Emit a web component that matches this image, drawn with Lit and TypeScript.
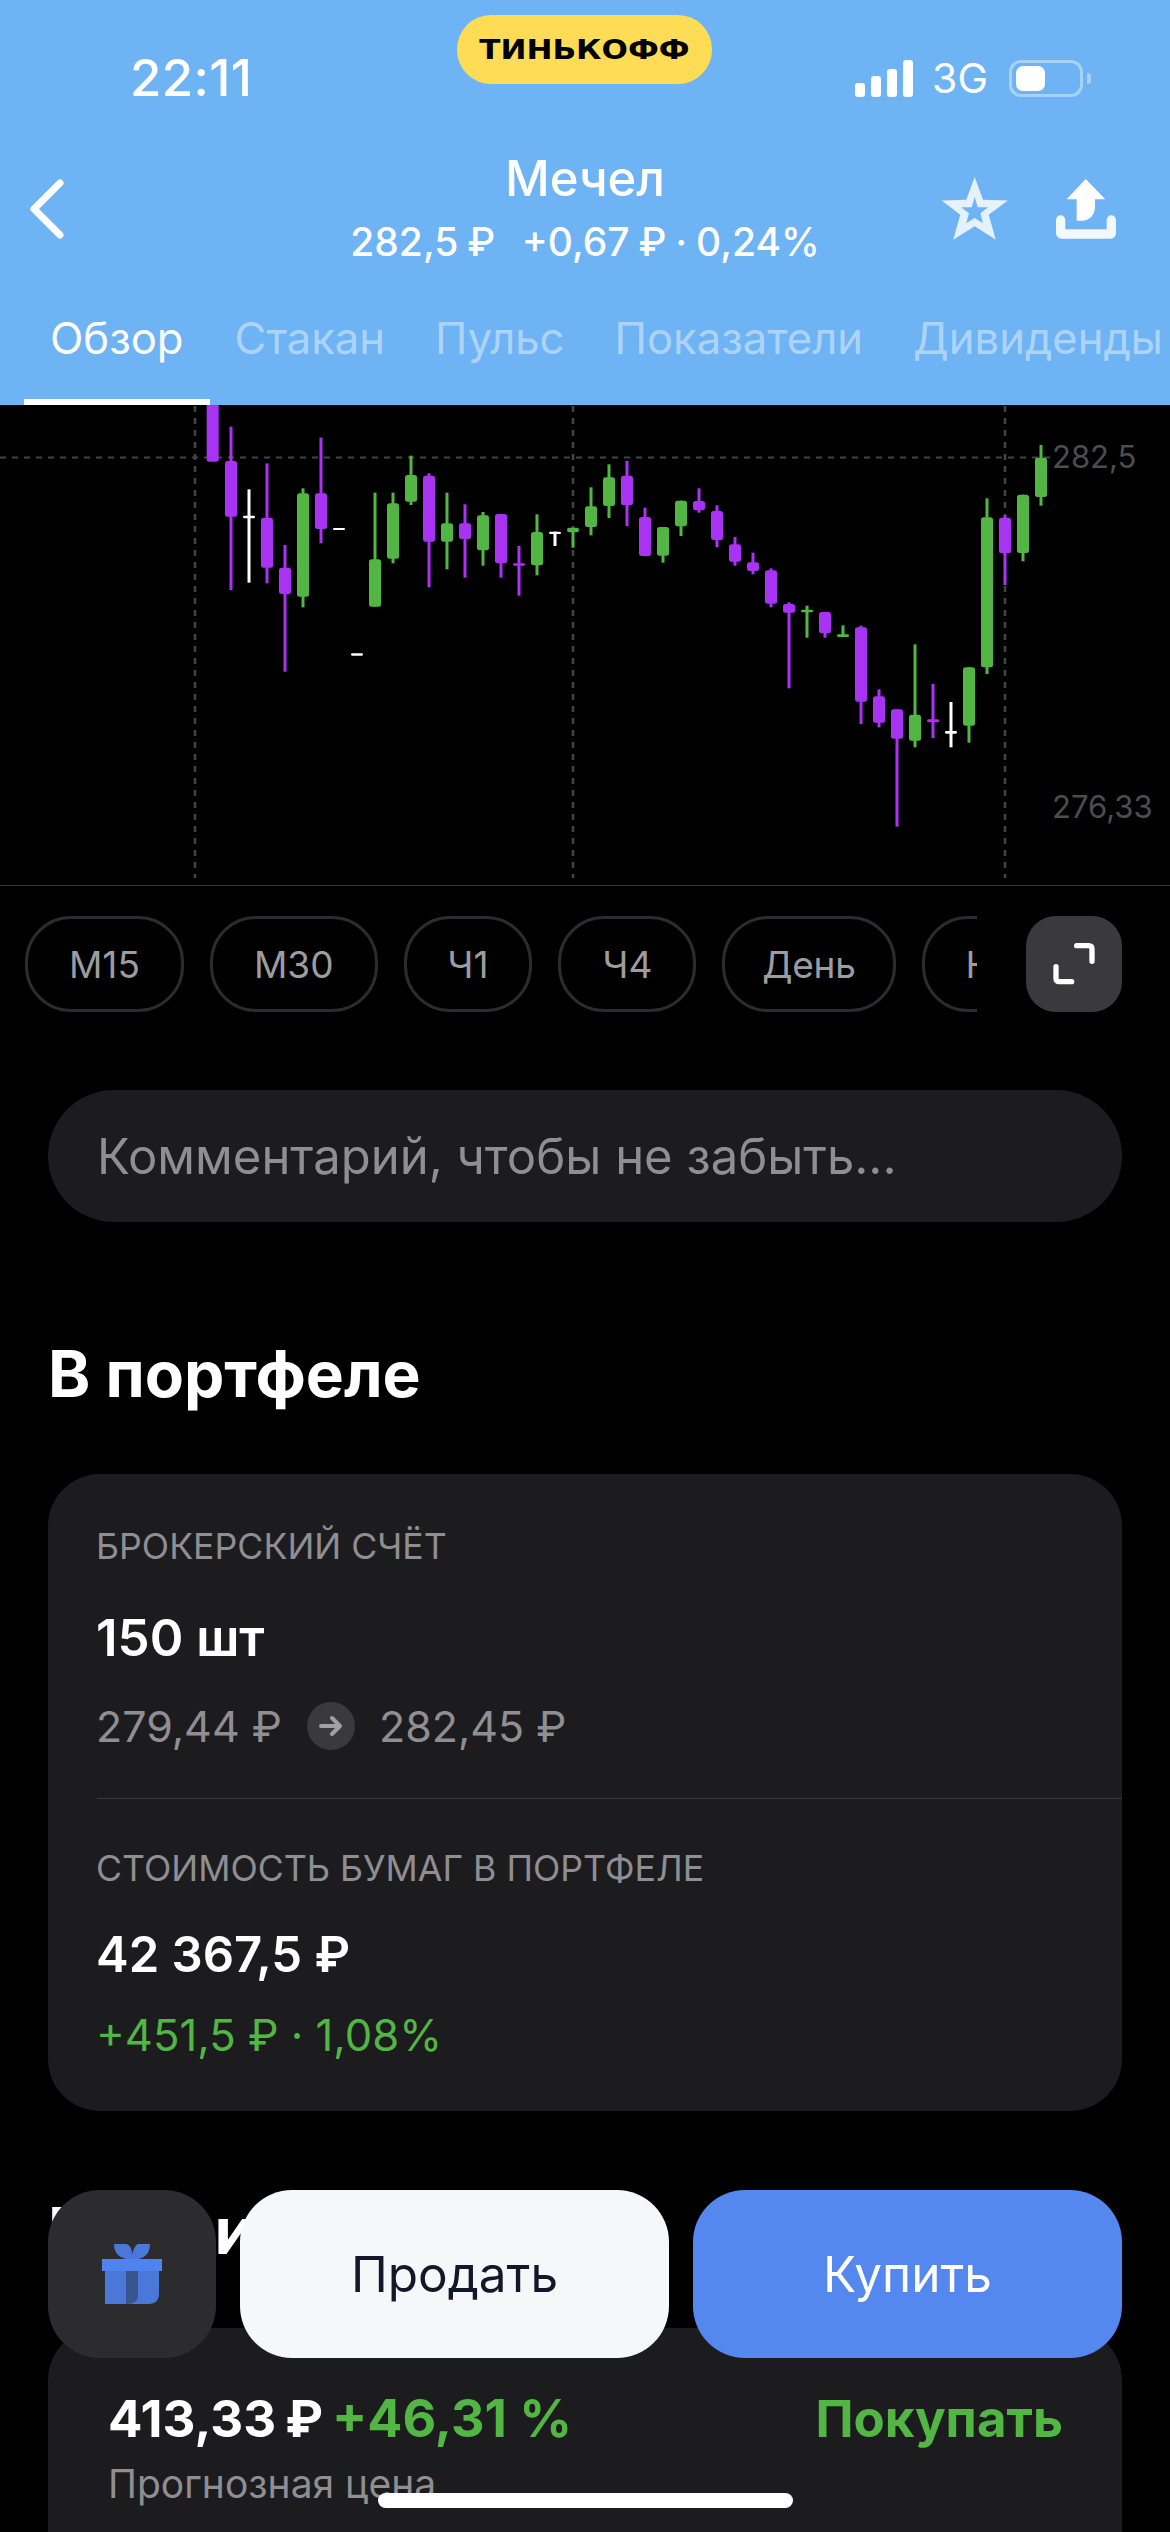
import { LitElement, html, css, svg } from "lit";
import { customElement } from "lit/decorators.js";

type C = [number, number | null, number | null, number, number, "p" | "g" | "w"];
// x, wick top, wick bottom, body top, body bottom (zoomed reference units)
const CANDLES: C[] = [
  [212.7, null, null, 0, 185, "p"], [231, 80, 570, 183, 350, "p"], [249, 268, 548, 347, 355, "w"],
  [267, 190, 550, 353, 503, "p"], [285, 435, 815, 503, 582, "p"], [303, 265, 622, 280, 590, "g"],
  [321, 113, 430, 280, 387, "p"], [339, null, null, 384, 390, "w"], [357, null, null, 760, 767, "w"],
  [375, 278, 620, 478, 620, "g"], [393, 278, 490, 310, 476, "g"], [411, 167, 315, 225, 305, "g"],
  [429, 220, 562, 227, 425, "p"], [447, 278, 508, 370, 425, "g"], [465, 313, 533, 370, 417, "p"],
  [483, 336, 497, 346, 451, "g"], [501, 342, 533, 342, 490, "p"], [519, 438, 587, 490, 497, "p"],
  [537, 343, 526, 396, 496, "g"], [555, 395, 438, 395, 402, "w"], [573, 383, 443, 383, 397, "g"],
  [591, 262, 406, 319, 381, "g"], [609, 193, 354, 232, 318, "g"], [627, 183, 378, 227, 316, "p"],
  [645, 323, 468, 351, 468, "p"], [663, 381, 488, 381, 467, "g"], [681, 302, 408, 302, 379, "g"],
  [699, 265, 338, 303, 331, "p"], [717, 316, 442, 333, 420, "p"], [735, 411, 497, 433, 485, "p"],
  [753, 458, 523, 487, 513, "p"], [771, 505, 622, 511, 611, "p"], [789, 607, 865, 612, 638, "p"],
  [807, 617, 713, 629, 637, "g"], [825, 636, 713, 636, 700, "p"], [843, 676, 711, 703, 711, "g"],
  [861, 677, 972, 682, 905, "p"], [879, 868, 982, 889, 968, "p"], [897, 928, 1280, 928, 1016, "p"],
  [915, 733, 1042, 944, 1022, "g"], [933, 852, 1014, 958, 967, "p"], [951, 906, 1042, 993, 1001, "w"],
  [969, 802, 1028, 802, 977, "g"], [987, 295, 822, 352, 802, "g"], [1005, 346, 555, 353, 460, "p"],
  [1023, 284, 484, 284, 459, "g"], [1041, 135, 317, 173, 291, "g"],
];
const COL = { p: "#a833f2", g: "#52b544", w: "#ffffff" };
const Y = (v: number) => 400 + v / 3;

function candle(c: C) {
  const [x, wt, wb, bt, bb, k] = c;
  const fill = COL[k];
  const h = Math.max(Y(bb) - Y(bt), 2);
  return svg`
    ${wt !== null && wb !== null
      ? svg`<rect x=${x - 1.5} y=${Y(wt)} width="3" height=${Y(wb) - Y(wt)} fill=${fill}></rect>`
      : ""}
    <rect x=${x - 6} y=${Y(bt)} width="12" height=${h} rx=${Math.min(2.5, h / 2)} fill=${fill}></rect>`;
}

const TABS = ["Обзор", "Стакан", "Пульс", "Показатели", "Дивиденды"];
const FRAMES = ["М5", "М15", "М30", "Ч1", "Ч4", "День", "Нед"];

@customElement("app-root")
export class AppRoot extends LitElement {
  static styles = css`
    :host {
      display: block;
      position: relative;
      width: 1170px;
      height: 2532px;
      overflow: hidden;
      background: #000;
      color: #fff;
      font-family: Inter, "Noto Sans", sans-serif;
    }
    .head { background: #6eb3f3; height: 405px; overflow: hidden; }
    .status { display: flex; align-items: center; height: 40px; padding: 58px 79px 0 130px; }
    .time { font-size: 51px; font-weight: 500; line-height: 40px; flex: 1; letter-spacing: 0.3px; }
    .bars { display: flex; align-items: flex-end; gap: 6px; height: 37px; margin-right: 19px; }
    .bars i { display: block; width: 10px; background: #fff; border-radius: 3px; }
    .net { font-size: 41px; line-height: 40px; margin-right: 21px; }
    .batt { width: 74px; height: 37px; box-sizing: border-box; border: 3px solid rgba(255,255,255,.4); border-radius: 12px; padding: 3px 4px; }
    .batt i { display: block; width: 29px; height: 100%; background: #fff; border-radius: 7px; }
    .nub { width: 4px; height: 11px; background: rgba(255,255,255,.4); border-radius: 0 3px 3px 0; margin-left: 4px; }
    .pill {
      position: absolute; left: 457px; top: 15px; width: 255px; height: 69px;
      background: #fedc56; border-radius: 34px; display: flex; align-items: center; justify-content: center;
      color: #000; font-family: "DejaVu Sans", sans-serif; font-weight: 700; font-size: 27px;
    }
    .pill span { display: block; transform: scaleX(1.15); }
    .nav { display: grid; grid-template-columns: 1fr auto 1fr; align-items: center; margin-top: 54px; height: 113px; }
    .back { margin-left: 30px; display: block; }
    .titles { text-align: center; }
    .title { font-size: 49px; line-height: 54px; font-weight: 500; }
    .sub { font-size: 39px; line-height: 46px; margin-top: 13px; white-space: pre; font-weight: 500; word-spacing: -1.5px; }
    .acts { display: flex; justify-content: flex-end; align-items: center; gap: 48px; padding-right: 54px; }
    .tabs { display: flex; margin-top: 48px; white-space: nowrap; padding-left: 24px; }
    .tab { padding: 0 25px 34px; font-size: 43.6px; line-height: 52px; color: rgba(255,255,255,.45); border-bottom: 6px solid transparent; }
    .tab.on { padding: 0 26px 34px; color: #fff; border-bottom-color: #fff; }
    .chart { display: block; width: 1170px; height: 480px; border-bottom: 1px solid #333; }
    .lab { font-size: 31px; fill: #4d4d4f; }
    .frames { display: flex; margin-top: 30px; padding-right: 48px; }
    .rail { flex: 1; min-width: 0; overflow: hidden; margin-right: 49px; }
    .track { display: flex; gap: 26px; margin-left: -145px; }
    .fr {
      flex: none; height: 96px; box-sizing: border-box; padding: 0 41px; border: 3px solid #2c2c2e; border-radius: 46px;
      display: flex; align-items: center; font-size: 37px; color: #9c9ca1;
    }
    .fr.word { padding: 0 37px; letter-spacing: -0.3px; }
    .exp { flex: none; width: 96px; height: 96px; display: block; }
    .comment {
      margin: 78px 48px 0; height: 132px; border-radius: 66px; background: #1c1c1e;
      padding-left: 49px; display: flex; align-items: center; font-size: 49px; color: #8e8e93;
    }
    h2 { margin: 116px 48px 64px; font-size: 64px; line-height: 72px; font-weight: 700; }
    h2.second { margin: 84px 48px 61px; }
    .card { margin: 0 48px; background: #1c1c1e; border-radius: 52px; overflow: hidden; }
    .sec { padding-left: 48px; }
    .sec.a { padding-top: 52px; padding-bottom: 46px; }
    .sec.b { padding-top: 49px; padding-bottom: 49px; }
    .rule { height: 1px; margin-left: 49px; background: #3a3a3c; }
    .lbl { font-size: 35.7px; line-height: 40px; color: #8e8e93; }
    .big { line-height: 56px; font-weight: 600; }
    .big.q { margin-top: 44px; font-size: 51px; }
    .big.v { margin-top: 39px; font-size: 49px; }
    .prices { display: flex; align-items: center; margin-top: 34px; font-size: 43px; line-height: 52px; color: #8e8e93; }
    .arrow { width: 48px; height: 48px; margin: 0 24px 0 25px; display: block; flex: none; }
    .gain { margin-top: 27px; font-size: 43.6px; line-height: 52px; color: #52b544; }
    .fc { padding: 60px 59px 100px 60px; }
    .fcrow { display: flex; justify-content: space-between; font-size: 51px; line-height: 62px; font-weight: 700; word-spacing: -3px; }
    .fcrow span span { color: #52b544; font-size: 52px; word-spacing: 0; }
    .fcrow .rec { color: #52b544; }
    .fcsub { margin-top: 12px; font-size: 39px; line-height: 44px; color: #8e8e93; }
    .actions { position: absolute; left: 48px; right: 48px; top: 2190px; height: 168px; display: flex; gap: 24px; }
    .btn { border-radius: 52px; display: flex; align-items: center; justify-content: center; font-size: 49.5px; flex: 1 1 0; }
    .btn.gift { flex: none; width: 168px; background: #2c2c2e; }
    .btn.sell { background: #f5f7f8; color: #12182a; }
    .btn.buy { background: #5488ee; color: #fff; }
    .home { position: absolute; left: 378px; top: 2493px; width: 415px; height: 15px; border-radius: 8px; background: #fff; }
  `;

  render() {
    return html`
      <div class="head">
        <div class="status">
          <div class="time">22:11</div>
          <div class="bars">
            <i style="height:14px"></i><i style="height:21px"></i><i style="height:28px"></i><i style="height:37px"></i>
          </div>
          <div class="net">3G</div>
          <div class="batt"><i></i></div>
          <div class="nub"></div>
        </div>
        <div class="nav">
          <svg class="back" width="40" height="64" viewBox="0 0 40 64" fill="none">
            <path d="M30 6 L4 32 L30 58" stroke="#fff" stroke-width="7" stroke-linecap="round" stroke-linejoin="round"></path>
          </svg>
          <div class="titles">
            <div class="title">Мечел</div>
            <div class="sub">282,5 ₽   +0,67 ₽ · 0,24%</div>
          </div>
          <div class="acts">
            <svg width="66" height="63" viewBox="68 45 196 188">
              <path fill="#fff" fill-opacity=".82" fill-rule="evenodd"
                d="M165 45L190 113L264 115L207 158L228 232L165 192L101 232L122 158L66 115L140 113Z
                   M165 105L156 135L125 135L148 153L140 183L165 167L190 183L182 153L205 135L174 135Z"></path>
            </svg>
            <svg width="60" height="60" viewBox="408 42 180 180">
              <path fill="#fff" d="M497 42L556 103H525V125C525 150 508 167 485 167H470V103H440Z"></path>
              <path fill="#fff" fill-opacity=".9" d="M408 165a14 14 0 0 1 28 0V193H560V165a14 14 0 0 1 28 0V205a16 16 0 0 1-16 16H424a16 16 0 0 1-16-16Z"></path>
            </svg>
          </div>
        </div>
        <div class="tabs">
          ${TABS.map((t, i) => html`<div class="tab ${i === 0 ? "on" : ""}">${t}</div>`)}
        </div>
      </div>
      <div class="pill"><span>ТИНЬКОФФ</span></div>

      <svg class="chart" viewBox="0 405 1170 480">
        <g stroke="#444" stroke-width="2.5" stroke-dasharray="6 6">
          <line x1="195" y1="406" x2="195" y2="878"></line>
          <line x1="573" y1="406" x2="573" y2="878"></line>
          <line x1="1005" y1="406" x2="1005" y2="878"></line>
        </g>
        <line x1="0" y1="457.5" x2="1050" y2="457.5" stroke="#444" stroke-width="2" stroke-dasharray="6 6"></line>
        ${CANDLES.map(candle)}
        <text class="lab" x="1052" y="468">282,5</text>
        <text class="lab" x="1052" y="818">276,33</text>
      </svg>

      <div class="frames">
        <div class="rail">
          <div class="track">
            ${FRAMES.map((f) => html`<div class="fr ${f === "День" ? "word" : ""}">${f}</div>`)}
          </div>
        </div>
        <svg class="exp" viewBox="198 48 288 288">
          <rect x="198" y="48" width="288" height="288" rx="90" fill="#3a3a3c"></rect>
          <path d="M350 137H386Q396 137 396 147V184M288 200V235Q288 245 298 245H335" fill="none" stroke="#fff" stroke-width="16" stroke-linecap="round"></path>
        </svg>
      </div>

      <div class="comment">Комментарий, чтобы не забыть...</div>

      <h2>В портфеле</h2>
      <div class="card">
        <div class="sec a">
          <div class="lbl">БРОКЕРСКИЙ СЧЁТ</div>
          <div class="big q">150 шт</div>
          <div class="prices">
            <span>279,44 ₽</span>
            <svg class="arrow" viewBox="0 0 48 48">
              <circle cx="24" cy="24" r="24" fill="#3a3a3c"></circle>
              <path d="M14 24H33M25 16L33 24L25 32" fill="none" stroke="#a0a0a5" stroke-width="4" stroke-linecap="round" stroke-linejoin="round"></path>
            </svg>
            <span>282,45 ₽</span>
          </div>
        </div>
        <div class="rule"></div>
        <div class="sec b">
          <div class="lbl">СТОИМОСТЬ БУМАГ В ПОРТФЕЛЕ</div>
          <div class="big v">42 367,5 ₽</div>
          <div class="gain">+451,5 ₽ · 1,08%</div>
        </div>
      </div>

      <h2 class="second">Прочие</h2>
      <div class="card fc">
        <div class="fcrow">
          <span>413,33 ₽ <span>+46,31 %</span></span>
          <span class="rec">Покупать</span>
        </div>
        <div class="fcsub">Прогнозная цена</div>
      </div>

      <div class="actions">
        <div class="btn gift">
          <svg width="60" height="60" viewBox="186 192 180 180">
            <path fill="#4a78d8" d="M222 192H258Q276 196 276 222Q284 196 294 192H330Q330 228 296 237H258Q222 228 222 192Z"></path>
            <path fill="#4a78d8" d="M195 273H357V340Q357 372 325 372H195Z"></path>
            <path fill="#3a5490" d="M258 273H294V345Q294 372 258 372Z"></path>
            <rect x="186" y="237" width="180" height="36" fill="#4f83f0"></rect>
          </svg>
        </div>
        <div class="btn sell">Продать</div>
        <div class="btn buy">Купить</div>
      </div>
      <div class="home"></div>
    `;
  }
}
